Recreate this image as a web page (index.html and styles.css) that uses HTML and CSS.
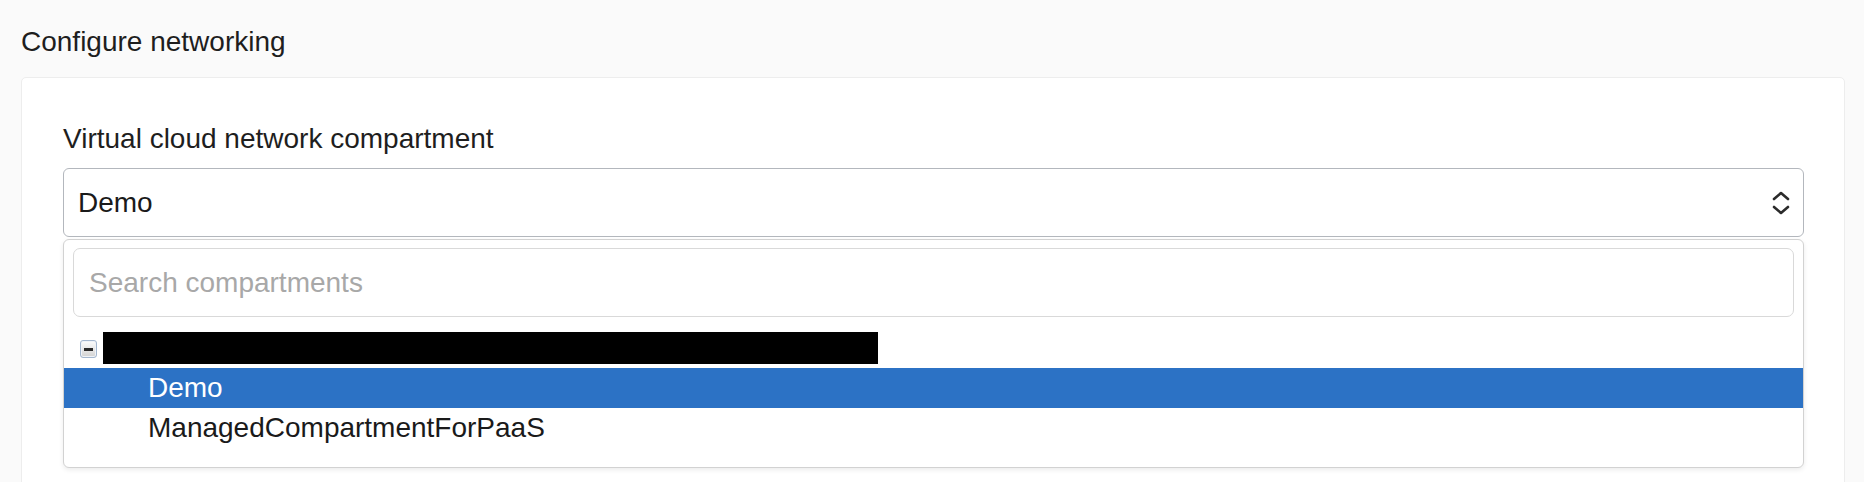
FILE: index.html
```html
<!DOCTYPE html>
<html>
<head>
<meta charset="utf-8">
<link rel="stylesheet" href="styles.css">
</head>
<body>
<div class="page">
  <h2 class="section-title">Configure networking</h2>
  <div class="card">
    <label class="field-label">Virtual cloud network compartment</label>
    <div class="select">
      <span class="select-value">Demo</span>
      <svg class="select-arrows" width="20" height="30" viewBox="0 0 20 30">
        <path d="M3 11 L10 5 L17 11" fill="none" stroke="#2b2b2b" stroke-width="2.6" stroke-linecap="round" stroke-linejoin="round"/>
        <path d="M3 19 L10 25 L17 19" fill="none" stroke="#2b2b2b" stroke-width="2.6" stroke-linecap="round" stroke-linejoin="round"/>
      </svg>
    </div>
    <div class="dropdown">
      <div class="search">Search compartments</div>
      <div class="tree-root">
        <span class="toggle"><span class="minus"></span></span>
        <span class="redacted"></span>
      </div>
      <div class="tree-item selected">Demo</div>
      <div class="tree-item">ManagedCompartmentForPaaS</div>
    </div>
  </div>
</div>
</body>
</html>
```

FILE: styles.css
```css
html, body {
  margin: 0;
  padding: 0;
  background: #fafafa;
}
body {
  font-family: "Liberation Sans", Arial, Helvetica, sans-serif;
  color: #1f1f1f;
  width: 1864px;
  height: 482px;
  overflow: hidden;
}
.page {
  padding: 26px 19px 0 21px;
}
.section-title {
  margin: 0 0 19px 0;
  font-size: 28px;
  font-weight: normal;
  line-height: 32px;
  color: #1e1e1e;
}
.card {
  background: #fff;
  border: 1px solid #ededed;
  border-radius: 5px;
  padding: 45px 40px 20px 41px;
}
.field-label {
  display: block;
  font-size: 28px;
  line-height: 32px;
  color: #1e1e1e;
  margin-bottom: 13px;
}
.select {
  height: 67px;
  border: 1px solid #b3b7bd;
  border-radius: 6px;
  display: flex;
  align-items: center;
  justify-content: space-between;
  padding: 0 12px 0 14px;
  background: #fff;
}
.select-value {
  font-size: 28px;
  color: #1a1a1a;
}
.select-arrows {
  display: block;
}
.dropdown {
  margin-top: 2px;
  border: 1px solid #d2d2d2;
  border-radius: 6px;
  box-shadow: 0 2px 5px rgba(0,0,0,0.08);
  background: #fff;
  padding: 8px 0 19px 0;
}
.search {
  margin: 0 9px;
  height: 67px;
  border: 1px solid #d9d9d9;
  border-radius: 7px;
  display: flex;
  align-items: center;
  padding-left: 15px;
  font-size: 28px;
  color: #a8a8a8;
}
.tree-root {
  display: flex;
  align-items: center;
  height: 32px;
  margin: 15px 0 4px 0;
  padding-left: 16px;
}
.toggle {
  width: 17px;
  height: 18px;
  border: 1px solid #a3b6ce;
  border-radius: 3px;
  background: linear-gradient(#fdfdfd, #d2d2d2);
  box-shadow: inset 0 0 0 1px #eef2f7;
  display: flex;
  align-items: center;
  justify-content: center;
  margin-top: 2px;
  margin-right: 6px;
  box-sizing: border-box;
}
.minus {
  width: 9px;
  height: 3px;
  background: #2a2a2a;
}
.redacted {
  width: 775px;
  height: 32px;
  background: #000;
}
.tree-item {
  height: 40px;
  line-height: 40px;
  font-size: 28px;
  padding-left: 84px;
  color: #1a1a1a;
}
.tree-item.selected {
  background: #2c72c5;
  color: #fff;
}
```
